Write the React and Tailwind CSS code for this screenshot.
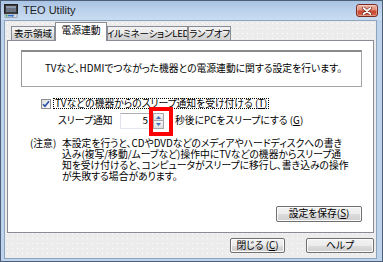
const JP = "font-['Noto_Sans_CJK_JP',sans-serif] [font-feature-settings:'palt']";

function AppIcon() {
  return (
    <svg width="15" height="14" viewBox="0 0 15 14" className="ml-[3px] shrink-0">
      <rect x="0.5" y="0.5" width="13" height="9" fill="#3a3a3a" stroke="#222" />
      <rect x="2" y="2" width="10" height="6" fill="#6a7485" />
      <rect x="2" y="2" width="10" height="2" fill="#8c96a8" />
      <rect x="1" y="10" width="12" height="3.5" fill="#d8dde6" stroke="#7a8494" strokeWidth="0.6" />
      <path d="M4 11.7 H9" stroke="#2f6fd0" strokeWidth="1.4" />
      <path d="M8 10.4 L10.5 11.7 L8 13" fill="#2f6fd0" />
      <rect x="2" y="10.8" width="1.4" height="1.8" fill="#2fa14a" />
    </svg>
  );
}

function CloseBtn() {
  return (
    <div className="ml-auto mr-[4px] w-[22px] h-[13px] rounded-[3px] border border-[#7b2a1f] bg-[linear-gradient(#eeb4a6_0%,#e08a76_45%,#c7442c_55%,#d9634a_100%)] flex items-center justify-center shadow-[inset_0_0_0_1px_rgba(255,255,255,0.35)]">
      <svg width="10" height="8" viewBox="0 0 10 8">
        <path d="M1.5 1 L8.5 7 M8.5 1 L1.5 7" stroke="#6a2118" strokeWidth="3" strokeLinecap="round" />
        <path d="M1.5 1 L8.5 7 M8.5 1 L1.5 7" stroke="#ffffff" strokeWidth="1.7" strokeLinecap="round" />
      </svg>
    </div>
  );
}

function Button({ className = "", children }) {
  return (
    <div
      className={`flex items-center justify-center rounded-[2px] border border-[#707070] bg-[linear-gradient(#f3f3f3_0%,#ebebeb_50%,#dddddd_50%,#cfcfcf_100%)] shadow-[inset_0_0_0_1px_#fbfbfb] text-[9.8px] leading-none text-black whitespace-nowrap ${JP} ${className}`}
    >
      {children}
    </div>
  );
}

function Tab({ selected, className = "", children }) {
  if (selected) {
    return (
      <div
        className={`relative z-10 -mb-px h-[19px] border border-b-0 border-[#898c95] bg-white flex items-center justify-center text-[9.8px] leading-none pb-[2px] whitespace-nowrap ${className}`}
      >
        {children}
      </div>
    );
  }
  return (
    <div
      className={`h-[14px] border border-b-0 border-[#898c95] bg-[linear-gradient(#f2f2f2_0%,#ebebeb_50%,#dddddd_50%,#d2d2d2_100%)] flex items-center justify-center text-[9.5px] leading-none whitespace-nowrap overflow-hidden ${className}`}
    >
      {children}
    </div>
  );
}

const NOTE_LINES = [
  "本設定を行うと、CDやDVDなどのメディアやハードディスクへの書き",
  "込み(複写/移動/ムーブなど)操作中にTVなどの機器からスリープ通",
  "知を受け付けると、コンピュータがスリープに移行し、書き込みの操作",
  "が失敗する場合があります。",
];

export default function App() {
  return (
    <div className={`w-[383px] h-[262px] flex flex-col overflow-hidden border border-[#4d5f78] bg-[#bdd3ec] text-black ${JP}`}>
      {/* title bar */}
      <div className="h-[19px] shrink-0 flex items-center bg-[linear-gradient(#a9c3e3_0%,#bcd2ec_50%,#c9dcf1_100%)]">
        <AppIcon />
        <span className="ml-[4px] text-[11px] leading-none font-['Liberation_Sans',sans-serif] text-[#1e1e1e]">TEO Utility</span>
        <CloseBtn />
      </div>

      {/* client area */}
      <div className="flex-1 ml-[3px] mr-[5px] mb-[2px] flex flex-col border border-[#8ea3bd] bg-[#ececec] bg-[radial-gradient(circle,#ffffff_0.6px,transparent_0.9px)] bg-[length:5px_5px]">
        {/* tabs */}
        <div className="h-[19px] shrink-0 flex items-end pl-[6px]">
          <Tab className="w-[44px]">表示領域</Tab>
          <Tab selected className="w-[52px]">電源連動</Tab>
          <Tab className="w-[81px] tracking-[-0.2px]">イルミネーションLED</Tab>
          <Tab className="w-[43px] tracking-[-0.2px]">ランプオフ</Tab>
        </div>

        {/* panel */}
        <div className="relative mx-[2px] h-[193px] shrink-0 border border-[#898c95] bg-white flex flex-col text-[9.8px]">
          <div className="mt-[9px] ml-[13px] w-[341px] h-[37px] border border-[#a5a5a5] border-t-2 border-t-[#8a8a8a] border-l-[#9a9a9a] flex items-center pl-[23px] leading-none whitespace-nowrap">
            TVなど、HDMIでつながった機器との電源連動に関する設定を行います。
          </div>

          {/* checkbox row */}
          <div className="mt-[11px] ml-[33px] h-[11px] flex items-center leading-none whitespace-nowrap">
            <div className="w-[10px] h-[10px] border border-[#8e8f8f] bg-[linear-gradient(135deg,#dcdcdc,#fdfdfd)] flex items-center justify-center">
              <svg width="8" height="8" viewBox="0 0 8 8">
                <path d="M1 4.2 L3 6.3 L7 1.3" fill="none" stroke="#2a4fa8" strokeWidth="1.6" />
              </svg>
            </div>
            <span className="ml-[2px] h-[11px] px-[1px] border border-dotted border-black flex items-center">
              TVなどの機器からのスリープ通知を受け付ける (<span className="underline">T</span>)
            </span>
          </div>

          {/* spin row */}
          <div className="mt-[4px] ml-[50px] h-[16px] flex items-center leading-none whitespace-nowrap">
            <span className="w-[62px]">スリープ通知</span>
            <div className="w-[32px] h-[16px] border border-[#abadb3] border-l-[#e2e3ea] border-b-[#e3e9ef] flex items-center justify-end pr-[3px]">5</div>
            <div className="ml-[1px] w-[11px] h-[16px] flex flex-col">
              <div className="h-[8px] border border-[#a7a7a7] bg-[linear-gradient(#f6f6f6,#dedede)] flex items-center justify-center">
                <svg width="5" height="3" viewBox="0 0 5 3"><path d="M0 3 L2.5 0 L5 3Z" fill="#3c6fb8" /></svg>
              </div>
              <div className="h-[8px] border border-t-0 border-[#a7a7a7] bg-[linear-gradient(#f6f6f6,#dedede)] flex items-center justify-center">
                <svg width="5" height="3" viewBox="0 0 5 3"><path d="M0 0 L2.5 3 L5 0Z" fill="#3c6fb8" /></svg>
              </div>
            </div>
            <span className="ml-[11px]">秒後にPCをスリープにする (<span className="underline">G</span>)</span>
          </div>

          {/* note */}
          <div className="mt-[9px] ml-[22px] flex leading-none whitespace-nowrap">
            <div className="w-[32px] h-[11px] flex items-center">(注意)</div>
            <div className="flex flex-col">
              {NOTE_LINES.map((l) => (
                <div key={l} className="h-[11px] flex items-center">{l}</div>
              ))}
            </div>
          </div>

          <div className="mt-auto mb-[10px] mr-[11px] flex justify-end">
            <Button className="w-[86px] h-[16px]">設定を保存(<span className="underline">S</span>)</Button>
          </div>

          {/* red annotation */}
          <div className="absolute left-[141px] top-[66px] w-[24px] h-[29px] border-4 border-[#ff0000]" />
        </div>

        {/* bottom buttons */}
        <div className="mt-[5px] flex justify-end pr-[2px]">
          <Button className="w-[55px] h-[15px]">閉じる (<span className="underline">C</span>)</Button>
          <Button className="ml-[21px] w-[68px] h-[15px]">ヘルプ</Button>
        </div>
      </div>
    </div>
  );
}
